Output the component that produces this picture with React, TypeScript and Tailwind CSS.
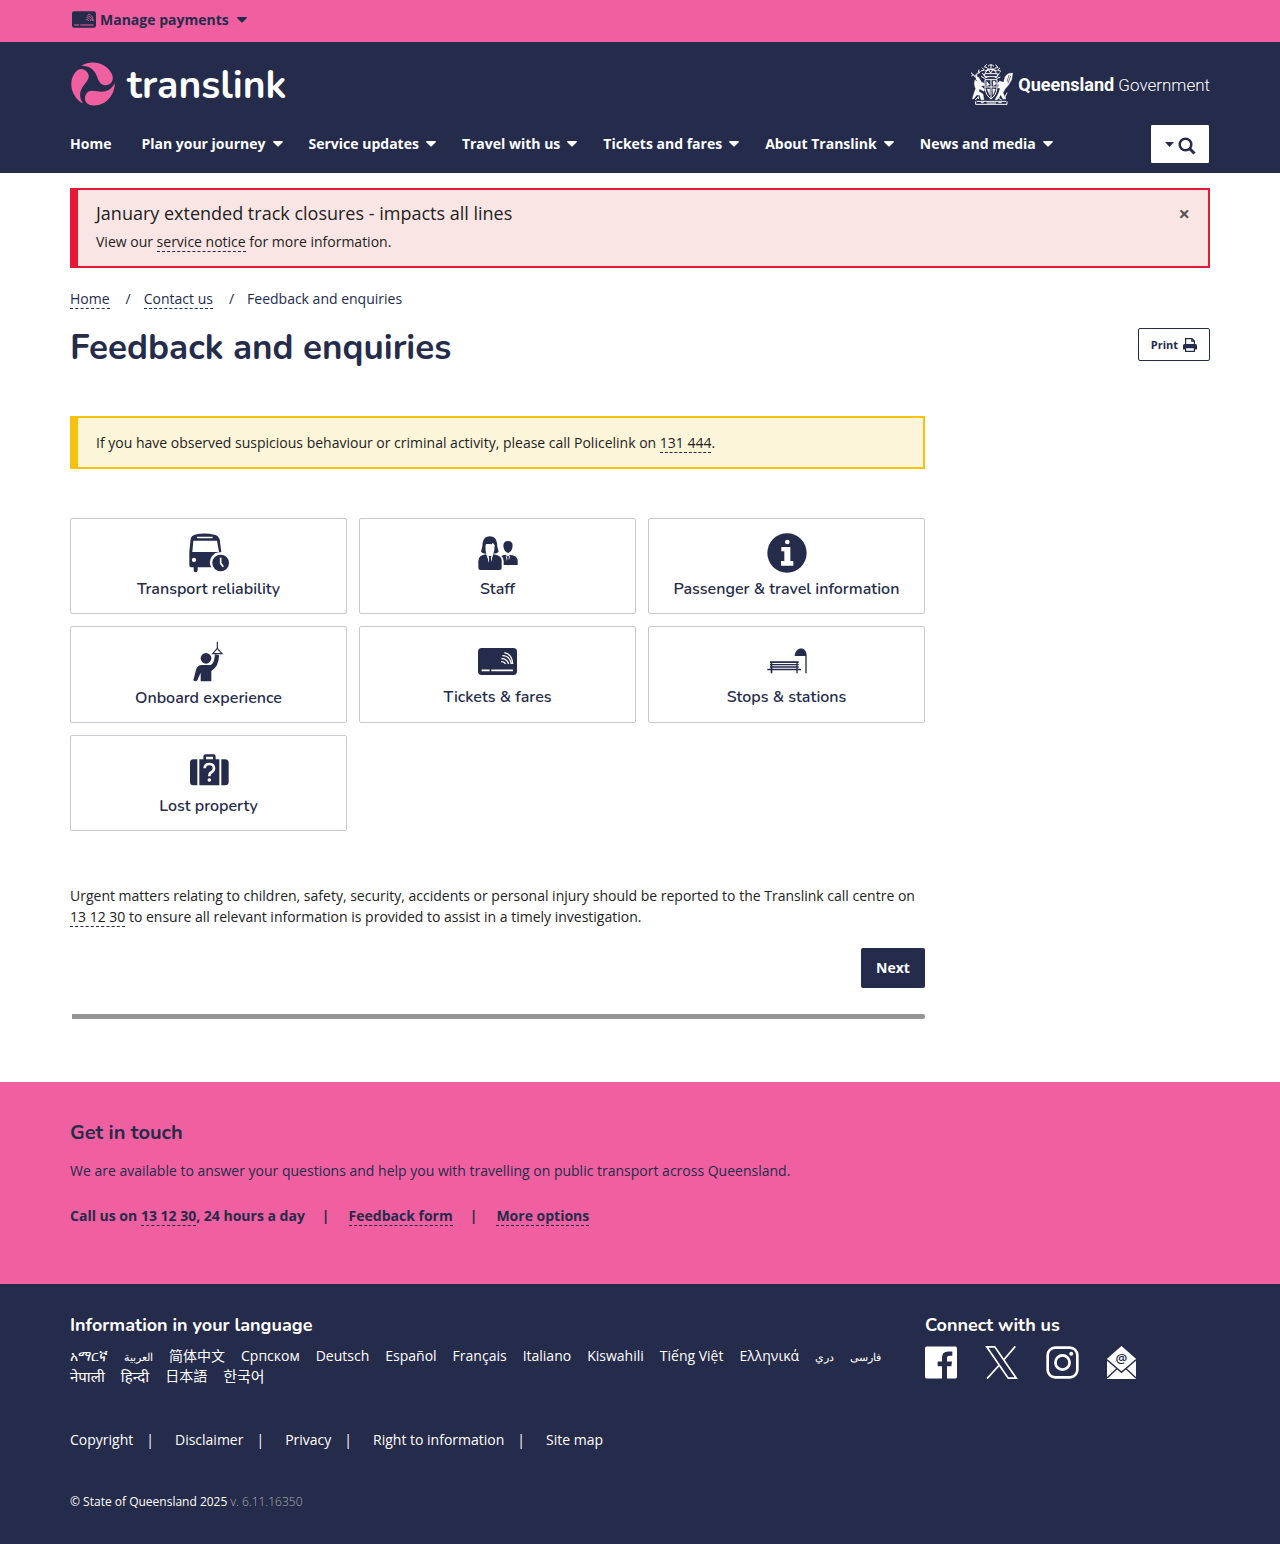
import type { ReactNode } from "react";

const link = "border-b border-dashed border-[#252b4b] whitespace-nowrap";
const heading = "font-[Nunito,Lato,sans-serif]";

function Container({ children, className = "" }: { children: ReactNode; className?: string }) {
  return <div className={`mx-auto max-w-[1170px] px-[15px] ${className}`}>{children}</div>;
}

function Caret() {
  return (
    <svg className="mt-0.5" width="10" height="6" viewBox="0 0 10 6" fill="currentColor" aria-hidden="true">
      <path d="M0.8 0h8.4c.7 0 1 .7.5 1.200L5.700 5.300a1 1 0 0 1-1.400 0L.3 1.200C-.2.7.1 0 .8 0Z" />
    </svg>
  );
}

function CardIcon({ className, lines = "#fff" }: { className: string; lines?: string }) {
  return (
    <svg className={className} viewBox="0 0 117 81" aria-hidden="true">
      <rect width="117" height="81" rx="11" fill="#252b4b" />
      <g fill="none" stroke={lines} strokeWidth="4">
        <path d="M11 67h24M40 67h65" strokeWidth="5" />
        <path d="M69 41a14 14 0 0 1 14 7M70 32c11 0 19 6 22 16M73 23c14 0 24 10 27 25M79 14c14 2 24 14 25 34" />
      </g>
    </svg>
  );
}

function BusIcon() {
  return (
    <svg width="40" height="40" viewBox="0 -1 120 120" fill="#252b4b" aria-hidden="true">
      <path
        fillRule="evenodd"
        d="M17 4Q46-3 76 4Q88 6 92 18L97 57A30 30 0 0 0 67 102H26v9a6 6 0 0 1-12 0v-9H6Q1 102 1 96V55L5 17Q7 7 17 4ZM24 10h47v5H24ZM13 22h71l6 34H10ZM15 73a6.500 6.500 0 1 1 0 13a6.500 6.500 0 0 1 0-13Z"
      />
      <circle cx="95" cy="89" r="25" />
      <path d="M95 73v17l8 10" fill="none" stroke="#fff" strokeWidth="5" />
    </svg>
  );
}

function StaffIcon() {
  return (
    <svg width="40" height="40" viewBox="0 -2 120 120" fill="#252b4b" aria-hidden="true">
      <path d="M35 8Q55 8 57 29Q57 42 62 54Q58 60 46 60Q50 49 50 35L44 27L43 32Q32 31 24 31Q20 42 25 60Q11 60 9 53Q14 40 14 27Q18 8 35 8Z" />
      <path d="M24 32Q24 56 35 58Q46 56 49 35L44 28L42 33Z" fill="#fff" />
      <path d="M24 62L32 74H38L46 62Q70 65 71 80V102Q71 109 65 109H7Q1 109 1 102V82Q2 64 24 62Z" />
      <path d="M28 65l6 22l-3-14ZM43 65l-6 22l3-14Z" stroke="#fff" strokeWidth="2.500" fill="#fff" />
      <path d="M32 67h8l-2 7l2 14l-4 6l-4-6l2-14Z" />
      <path d="M90 22Q104 22 104 37Q102 54 90 58Q78 54 76 37Q76 22 90 22Z" />
      <path d="M75 65L84 63L89 73L96 63Q118 66 119 79V94H77V82Q77 72 70 67Z" />
      <path d="M83 66l6 24l8-24l-6 5h-3Z" fill="#fff" />
      <path d="M86 68h7l-1 6l2 15l-4 7l-4-7l2-15Z" />
    </svg>
  );
}

function InfoIcon() {
  return (
    <svg width="40" height="40" viewBox="0 0 120 120" aria-hidden="true">
      <circle cx="60" cy="60" r="59" fill="#252b4b" />
      <circle cx="61" cy="27" r="7" fill="#fff" />
      <path d="M43 42h27v42h9v14H42V84h10V55h-9Z" fill="#fff" />
    </svg>
  );
}

function OnboardIcon() {
  return (
    <svg width="40" height="41" viewBox="5 3 120 123" fill="#252b4b" aria-hidden="true">
      <circle cx="56" cy="55" r="16" />
      <path d="M42 75h28Q81 71 83 43L95 46Q95 80 72 93V124H40V98L30 121Q25 127 18 121L26 90Q29 77 42 75Z" />
      <path d="M90 5v19M90 25L76 41h28Z" fill="none" stroke="#252b4b" strokeWidth="3.500" />
    </svg>
  );
}

function BenchIcon() {
  return (
    <svg width="40" height="40" viewBox="0 0 120 120" fill="#252b4b" aria-hidden="true">
      <path d="M83 45C85 15 119 15 119 43V97h-4V45Z" />
      <path d="M9 61h86v5H9ZM9 69h86v4H9ZM9 76h86v4H9ZM1 83h101v5H1ZM11 61h5v36h-5ZM88 61h4v36h-4Z" />
    </svg>
  );
}

function LuggageIcon() {
  return (
    <svg width="40" height="40" viewBox="-1 0 120 120" fill="#252b4b" aria-hidden="true">
      <path
        fillRule="evenodd"
        d="M49 13h23q7 0 7 7v8h11v78H30V28h12v-8q0-7 7-7Zm1 7v8h21v-8Z"
      />
      <path d="M24 28v78h-12Q2 106 2 96V39Q2 28 12 28ZM96 28h11q11 0 11 11v57q0 10-11 10H96Z" />
      <path d="M46 55Q46 42 60 42Q74 42 74 55Q73 64 64 68Q60 71 60 79" fill="none" stroke="#fff" strokeWidth="8" />
      <circle cx="60" cy="90" r="5.500" fill="#fff" />
    </svg>
  );
}

const blade =
  "M30 10C60-8 102 0 119 32C129 50 121 66 102 68C88 69 82 58 77 44C68 20 55 10 30 10Z";

function TranslinkLogo() {
  return (
    <a href="#home" className="flex items-center gap-3 pl-px text-white">
      <svg width="44" height="44" viewBox="-1 -1 131 131" fill="#f060a1" aria-hidden="true">
        <path d={blade} />
        <path d={blade} transform="rotate(120 64.5 65)" />
        <path d={blade} transform="rotate(240 64.5 65)" />
      </svg>
      <span className={`${heading} pt-1 text-[39px] leading-10 font-bold`}>translink</span>
    </a>
  );
}

function Crest() {
  return (
    <svg width="44" height="42" viewBox="0 0 132 126" fill="#fff" stroke="#fff" aria-hidden="true">
      <g fill="none" strokeWidth="3">
        <path d="M45 50h36v25q-2 22-18 33q-16-11-18-33ZM63 50v56M46 72h34" />
        <path d="M63 4v12M54 10q8-9 18 0M50 18h26M44 24q18-9 38 0M46 30l8-12 8 12 8-12 9 12M44 32h38v9H44Z" />
        <path d="M50 4l-7 8 9 2M77 5l7 9-9 1M36 14l7 7-10 3M90 15l-7 6 10 4M37 30l6 9M89 29l-7 10M33 40l10 6 10-4M91 42l-9 4-8-4" />
        <path d="M3 29l11 10 9-9M9 33l-4 7M20 34v9M27 20l-3 12M31 24l-5 8" />
        <path d="M20 115h88M17 124h94M17 115v9M111 115v9M33 119h8M50 120h28M85 119h10" />
        <path d="M25 108v-7l-9 10M103 106l8-17M89 82l-3 24 9 5" />
      </g>
      <path d="M11 38l15 5 8 14 8 3 2 7-11 3 11 9-2 6-13-7-3 7 13 8 3 17h-9l-4-13-9-1-9 12h-4l5-18 5-13q-9-18 2-31Z" />
      <path d="M128 30l-3 20-10 17-10 11-6 12 9 18h-9l-7-13-10 15h-7l13-24 2-10-7-2 4-9-6-2 8-9 12 4 4-17 9-9Z" />
      <path d="M50 55l9 10-9 4ZM69 55h6l3 8-8 6ZM51 78h8v18ZM68 77l8 2-7 17Z" />
      <path d="M117 36l-6 20M122 39l-8 22M15 49l7 5" fill="none" stroke="#252b4b" strokeWidth="2" />
    </svg>
  );
}

const nav = ["Plan your journey", "Service updates", "Travel with us", "Tickets and fares", "About Translink", "News and media"];

const tiles: { label: string; icon: ReactNode }[] = [
  { label: "Transport reliability", icon: <BusIcon /> },
  { label: "Staff", icon: <StaffIcon /> },
  { label: "Passenger & travel information", icon: <InfoIcon /> },
  { label: "Onboard experience", icon: <OnboardIcon /> },
  {
    label: "Tickets & fares",
    icon: (
      <span className="flex h-10 items-center">
        <CardIcon className="h-[27px] w-[39px]" />
      </span>
    ),
  },
  { label: "Stops & stations", icon: <BenchIcon /> },
  { label: "Lost property", icon: <LuggageIcon /> },
];

const small = "text-[11px]";
const large = "text-[15px]";

const languages: { name: string; size?: string }[] = [
  { name: "አማርኛ" },
  { name: "العربية", size: small },
  { name: "简体中文" },
  { name: "Српском" },
  { name: "Deutsch" },
  { name: "Español" },
  { name: "Français" },
  { name: "Italiano" },
  { name: "Kiswahili" },
  { name: "Tiếng Việt" },
  { name: "Ελληνικά" },
  { name: "دري", size: small },
  { name: "فارسی", size: small },
  { name: "नेपाली", size: large },
  { name: "हिन्दी", size: large },
  { name: "日本語" },
  { name: "한국어", size: large },
];

const legal = ["Copyright", "Disclaimer", "Privacy", "Right to information", "Site map"];

function Social() {
  return (
    <div className="flex items-center gap-7 pt-2">
      <a href="#facebook" aria-label="Facebook">
        <svg width="32" height="33" viewBox="0 0 96 96" fill="#fff">
          <path d="M5 0h86q5 0 5 5v86q0 5-5 5H66V59h13l2-14H66V35q0-7 8-7h8V15H70Q51 15 51 33v12H38v14h13v37H5q-5 0-5-5V5q0-5 5-5Z" />
        </svg>
      </a>
      <a href="#x" aria-label="X">
        <svg width="33" height="33" viewBox="0 0 98 98" fill="none" stroke="#fff" strokeWidth="5">
          <path d="M5 2.500h24L93 95.500H69ZM90 1L56 41M42 57L6 97" />
        </svg>
      </a>
      <a href="#instagram" aria-label="Instagram">
        <svg width="33" height="33" viewBox="0 0 98 98" fill="none" stroke="#fff" strokeWidth="8">
          <rect x="5" y="5" width="88" height="88" rx="22" />
          <circle cx="49" cy="49" r="21" />
          <circle cx="75" cy="23" r="6" fill="#fff" stroke="none" />
        </svg>
      </a>
      <a href="#newsletter" aria-label="Email newsletter">
        <svg width="29" height="33" viewBox="0 0 86 98">
          <path d="M43 0L86 38V98H0V38Z" fill="#fff" />
          <path d="M0 41L43 78L86 41M0 95L30 67M86 95L56 67" fill="none" stroke="#252b4b" strokeWidth="4" />
          <text x="43" y="50" textAnchor="middle" fontSize="39" fontWeight="600" fontFamily="Open Sans, sans-serif" fill="#252b4b">
            @
          </text>
        </svg>
      </a>
    </div>
  );
}

export default function App() {
  return (
    <div className="bg-white font-['Open_Sans',sans-serif] text-sm leading-[21px] font-normal text-[#252b4b]">
      <div className="bg-[#f060a1]">
        <Container>
          <button type="button" className="flex h-[42px] items-center pb-1 pl-0.5 font-bold">
            <CardIcon className="mr-1 h-[17px] w-[24px]" lines="#f060a1" />
            Manage payments
            <span className="ml-2">
              <Caret />
            </span>
          </button>
        </Container>
      </div>

      <header className="bg-[#252b4b] text-white">
        <Container className="pt-5 pb-2.5">
          <div className="flex items-center justify-between">
            <TranslinkLogo />
            <a href="#qld" className="flex items-center gap-1 font-[Roboto,sans-serif] text-[17px] leading-6">
              <Crest />
              <span className="pt-0.5">
                <strong className="text-lg leading-6 font-bold">Queensland</strong> <span className="font-light">Government</span>
              </span>
            </a>
          </div>
          <nav className="mt-[19px] flex items-center justify-between font-bold">
            <ul className="flex items-center gap-[26px] pb-0.5">
              <li className="mr-1">
                <a href="#home">Home</a>
              </li>
              {nav.map((item) => (
                <li key={item}>
                  <a href="#menu" className="flex items-center gap-[7px]">
                    {item}
                    <Caret />
                  </a>
                </li>
              ))}
            </ul>
            <button type="button" aria-label="Search" className="mr-px flex h-[38px] w-[58px] items-center justify-center gap-1 rounded-[1px] bg-white text-[#252b4b]">
              <svg width="9" height="5" viewBox="0 0 9 5" fill="currentColor">
                <path d="M0 0h9L4.500 5Z" />
              </svg>
              <svg width="18" height="18" viewBox="0 0 18 18" fill="none" stroke="currentColor" strokeWidth="2.500" className="mt-1">
                <circle cx="7.500" cy="7.500" r="5.800" />
                <path d="M11.500 11.500L16.500 16.500" strokeWidth="3" />
              </svg>
            </button>
          </nav>
        </Container>
      </header>

      <main>
        <Container className="pt-[15px] pb-[63px]">
          <section className="flex items-start justify-between border-2 border-l-8 border-[#e41937] bg-[#f9e5e3] px-[18px] pt-2.5 pb-3.5">
            <div>
              <h2 className="text-lg leading-[27px] text-[#222]">January extended track closures - impacts all lines</h2>
              <p className="mt-1 text-[#222]">
                View our <a href="#notice" className={link}>service notice</a> for more information.
              </p>
            </div>
            <button type="button" aria-label="Close" className="pt-[3px] text-xl leading-[21px] font-bold text-[#555]">×</button>
          </section>

          <nav aria-label="Breadcrumb" className="mt-5">
            <ol className="flex">
              <li><a href="#home" className={link}>Home</a></li>
              <li className="before:mr-[13px] before:ml-4 before:content-['/']"><a href="#contact" className={link}>Contact us</a></li>
              <li className="before:mr-[13px] before:ml-4 before:content-['/']">Feedback and enquiries</li>
            </ol>
          </nav>

          <div className="mt-[19px] flex items-start justify-between">
            <h1 className={`${heading} text-[35px] leading-10 font-bold`}>Feedback and enquiries</h1>
            <button type="button" className="flex h-[33px] w-[72px] items-center justify-center gap-[5px] rounded-[2px] border border-[#252b4b] text-[11px] font-bold">
              Print
              <svg width="14" height="14" viewBox="0 0 14 14" fill="none" stroke="currentColor" strokeWidth="1.200">
                <path d="M2.600 7V.6h6.400l2.400 2.400v4M8.800.6v2.600h2.600" />
                <path d="M0 11.500V7.500q0-1.500 1.500-1.500h11q1.500 0 1.500 1.500v4Z" fill="currentColor" stroke="none" />
                <path d="M2.600 9.600h8.800v3.800H2.600Z" fill="#fff" />
              </svg>
            </button>
          </div>

          <div className="w-3/4">
            <p className="mt-12 border-2 border-l-8 border-[#f9c20a] bg-[#fdf5d9] px-[18px] py-3.5 text-[#222]">
              If you have observed suspicious behaviour or criminal activity, please call Policelink on{" "}
              <a href="tel:131444" className={link}>131 444</a>.
            </p>

            <div className="mt-[49px] grid grid-cols-3 gap-3">
              {tiles.map((tile) => (
                <a key={tile.label} href="#topic" className={`${heading} flex flex-col items-center rounded-[2px] border border-[#c8cad2] pt-3.5 pb-[11px] text-base leading-[26px] font-semibold`}>
                  {tile.icon}
                  <span className="pt-[3px]">{tile.label}</span>
                </a>
              ))}
            </div>

            <p className="mt-[54px] text-[#222]">
              Urgent matters relating to children, safety, security, accidents or personal injury should be reported to the
              Translink call centre on <a href="tel:131230" className={link}>13 12 30</a> to ensure all relevant information is
              provided to assist in a timely investigation.
            </p>

            <div className="mt-[21px] flex justify-end">
              <button type="button" className="h-10 w-16 rounded-[2px] bg-[#252b4b] pb-0.5 font-bold text-white">Next</button>
            </div>
            <div className="mt-[26px] ml-0.5 h-[5px] rounded-r-[2px] bg-[#959595]" />
          </div>
        </Container>
      </main>

      <section className="bg-[#f060a1]">
        <Container className="pt-[37px] pb-[58px]">
          <h2 className={`${heading} text-xl leading-[27px] font-bold`}>Get in touch</h2>
          <p className="mt-3.5">We are available to answer your questions and help you with travelling on public transport across Queensland.</p>
          <ul className="mt-6 flex font-bold">
            <li>Call us on <a href="tel:131230" className={link}>13 12 30</a>, 24 hours a day</li>
            <li className="before:mr-[19px] before:ml-[17px] before:content-['|']"><a href="#feedback" className={link}>Feedback form</a></li>
            <li className="before:mr-[19px] before:ml-[17px] before:content-['|']"><a href="#options" className={link}>More options</a></li>
          </ul>
        </Container>
      </section>

      <footer className="bg-[#252b4b] text-white">
        <Container className="pt-7 pb-8">
          <div className="flex">
            <div className="w-3/4">
              <h2 className={`${heading} text-lg leading-[26px] font-bold`}>Information in your language</h2>
              <ul className="mt-2 flex flex-wrap gap-x-4 leading-5">
                {languages.map(({ name, size = "text-sm" }) => (
                  <li key={name} className="h-5">
                    <a href="#language" className={`font-['Open_Sans','Noto_Sans','Noto_Sans_CJK_SC',sans-serif] ${size} leading-5`}>{name}</a>
                  </li>
                ))}
              </ul>
            </div>
            <div>
              <h2 className={`${heading} text-lg leading-[26px] font-bold`}>Connect with us</h2>
              <Social />
            </div>
          </div>
          <ul className="mt-[43px] flex">
            {legal.map((item, i) => (
              <li key={item}>
                {i > 0 && <span className="mr-[21px] ml-[13px]">|</span>}
                <a href="#legal">{item}</a>
              </li>
            ))}
          </ul>
          <p className="mt-[41px] text-xs leading-[21px]">
            © State of Queensland 2025 <span className="font-light text-[#b0b0b0]">v. 6.11.16350</span>
          </p>
        </Container>
      </footer>
    </div>
  );
}
